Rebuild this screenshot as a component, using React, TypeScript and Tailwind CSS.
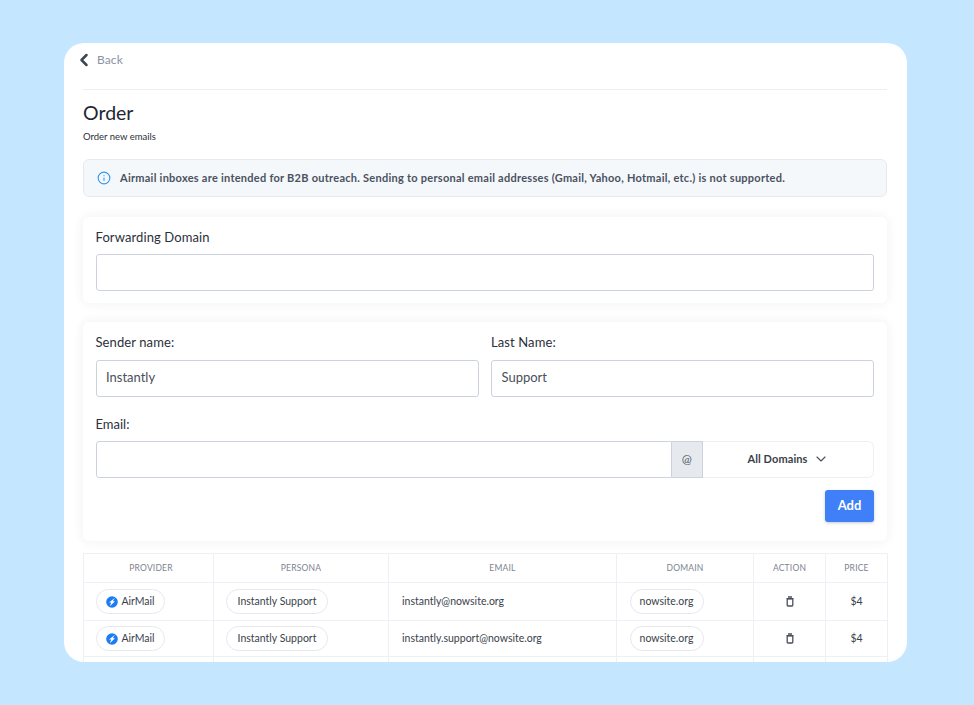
import { ChevronDown, ChevronLeft, Info } from "lucide-react";

const rows = [
  { persona: "Instantly Support", email: "instantly@nowsite.org", domain: "nowsite.org", height: "h-[38px]" },
  { persona: "Instantly Support", email: "instantly.support@nowsite.org", domain: "nowsite.org", height: "h-[36px]" },
];

const Pill = ({ children, className = "" }: { children: React.ReactNode; className?: string }) => (
  <span className={`flex h-[25px] items-center justify-center rounded-full border border-[#e6e8ee] text-[10.5px] text-[#3a3f4b] ${className}`}>
    {children}
  </span>
);

const AirMailLogo = () => (
  <svg width="12" height="12" viewBox="0 0 12 12">
    <circle cx="6" cy="6" r="5.8" fill="#1c7cf2" />
    <path d="M8.8 2 3 6.6h2.2L3.8 10.2l5.2-5H6.8z" fill="#fff" />
  </svg>
);

const TrashIcon = () => (
  <svg width="10" height="11" viewBox="0 0 10 11" fill="none" stroke="#4a4f5a" strokeWidth="1.3">
    <path d="M3 1h4M1.5 2.6h7" />
    <rect x="2.2" y="2.8" width="5.6" height="7.2" rx="0.8" />
  </svg>
);

const TextInput = ({ value = "", className = "" }: { value?: string; className?: string }) => (
  <input
    readOnly
    value={value}
    className={`h-[37px] rounded-[3px] border border-[#ccd3de] bg-white pb-[3px] pl-[9.5px] pr-[10px] text-[13px] text-[#4a4f5a] outline-none ${className}`}
  />
);

const App = () => {
  return (
    <div className="h-[705px] w-[974px] overflow-hidden bg-[#c4e7ff] px-[64px] pt-[43px] font-['Lato',sans-serif]">
      <div className="h-[619px] w-[843px] overflow-hidden rounded-[20px] bg-white pl-[19px] pr-[20px]">
        {/* Back */}
        <div className="flex h-[47px] items-center gap-[3.5px] border-b border-[#eceef2] pb-[13px]">
          <ChevronLeft size={20} strokeWidth={3} className="ml-[-9.5px] text-[#3f4653]" />
          <span className="text-[12px] tracking-[0.1px] text-[#8a93a6]">Back</span>
        </div>

        <h1 className="mt-[10px] text-[19.5px] leading-[26px] text-[#1f2533]">Order</h1>
        <p className="mt-[5px] text-[9.5px] leading-[12px] text-[#2b303b]">Order new emails</p>

        {/* Alert */}
        <div className="mt-[16px] flex h-[38px] items-center gap-[9px] rounded-[6px] border border-[#e6eaf0] bg-[#f5f8fb] pl-[13px]">
          <Info size={14} className="text-[#3a9be8]" />
          <span className="text-[11px] font-bold tracking-[0.26px] text-[#4a5260]">
            Airmail inboxes are intended for B2B outreach. Sending to personal email addresses (Gmail, Yahoo, Hotmail, etc.) is not supported.
          </span>
        </div>

        {/* Forwarding domain */}
        <div className="mt-[20px] flex h-[86px] flex-col rounded-[6px] bg-white pl-[12.5px] pr-[13px] pt-[12px] shadow-[0_0_12px_rgba(30,40,60,0.07)]">
          <label className="mb-[8px] text-[13px] leading-[17px] tracking-[0.1px] text-[#2b303b]">Forwarding Domain</label>
          <TextInput className="w-full" />
        </div>

        {/* Sender */}
        <div className="mt-[19px] h-[219px] rounded-[6px] bg-white pl-[12.5px] pr-[13px] pt-[12px] shadow-[0_0_12px_rgba(30,40,60,0.07)]">
          <div className="grid grid-cols-[383.5px_383px] gap-x-[12px]">
            <div>
              <label className="mb-[9px] block text-[13px] leading-[17px] tracking-[0.1px] text-[#2b303b]">Sender name:</label>
              <TextInput value="Instantly" className="w-full" />
            </div>
            <div>
              <label className="mb-[9px] block text-[13px] leading-[17px] tracking-[0.1px] text-[#2b303b]">Last Name:</label>
              <TextInput value="Support" className="w-full" />
            </div>
          </div>
          <label className="mb-[8px] mt-[19px] block text-[13px] leading-[17px] text-[#2b303b]">Email:</label>
          <div className="flex h-[37px]">
            <input readOnly className="h-full w-[576px] rounded-l-[3px] border border-[#ccd3de] bg-white outline-none" />
            <div className="flex w-[31.5px] items-center justify-center border-y border-r border-[#ccd3de] bg-[#e6eaee] pb-[2px] text-[12px] text-[#555b66]">@</div>
            <div className="flex flex-1 items-center justify-center gap-[5px] rounded-r-[6px] border-y border-r border-[#eef0f4] pb-[1px] text-[11px] font-bold tracking-[0.1px] text-[#3a3f4b]">
              All Domains
              <ChevronDown size={16} strokeWidth={1.7} className="text-[#4a4f5a]" />
            </div>
          </div>
          <div className="mt-[12px] flex justify-end">
            <button className="h-[32px] w-[49px] rounded-[3px] bg-[#3f7ff7] text-[13px] font-bold text-white shadow-[0_1px_3px_rgba(30,40,60,0.25)]">Add</button>
          </div>
        </div>

        {/* Table */}
        <table className="mt-[12px] w-[804px] table-fixed border-collapse border border-[#eef0f6]">
          <colgroup>
            <col className="w-[130px]" />
            <col className="w-[175px]" />
            <col className="w-[228px]" />
            <col className="w-[137px]" />
            <col className="w-[72px]" />
            <col className="w-[62px]" />
          </colgroup>
          <thead>
            <tr className="h-[29px]">
              {["PROVIDER", "PERSONA", "EMAIL", "DOMAIN", "ACTION", "PRICE"].map((h) => (
                <th
                  key={h}
                  className={`border border-[#eef0f6] text-center text-[8.5px] font-normal tracking-[0.2px] text-[#7d8390] ${h === "PROVIDER" ? "pl-[5px]" : ""}`}
                >
                  {h}
                </th>
              ))}
            </tr>
          </thead>
          <tbody>
            {rows.map((row, i) => (
              <tr key={i} className={row.height}>
                <td className="border border-[#eef0f6] pl-[12px]">
                  <Pill className="w-[69px] gap-[3px]">
                    <AirMailLogo />
                    AirMail
                  </Pill>
                </td>
                <td className="border border-[#eef0f6] pl-[12px]">
                  <Pill className="w-[102px]">{row.persona}</Pill>
                </td>
                <td className="border border-[#eef0f6] pl-[13px] text-[10.5px] text-[#3a3f4b]">{row.email}</td>
                <td className="border border-[#eef0f6] pl-[12.5px]">
                  <Pill className="w-[74px]">{row.domain}</Pill>
                </td>
                <td className="border border-[#eef0f6]">
                  <div className="flex justify-center"><TrashIcon /></div>
                </td>
                <td className="border border-[#eef0f6] text-center text-[10.5px] text-[#3a3f4b]">$4</td>
              </tr>
            ))}
            <tr className="h-[37px]">
              {[0, 1, 2, 3, 4, 5].map((c) => (
                <td key={c} className="border border-[#eef0f6]" />
              ))}
            </tr>
          </tbody>
        </table>
      </div>
    </div>
  );
};

export default App;
